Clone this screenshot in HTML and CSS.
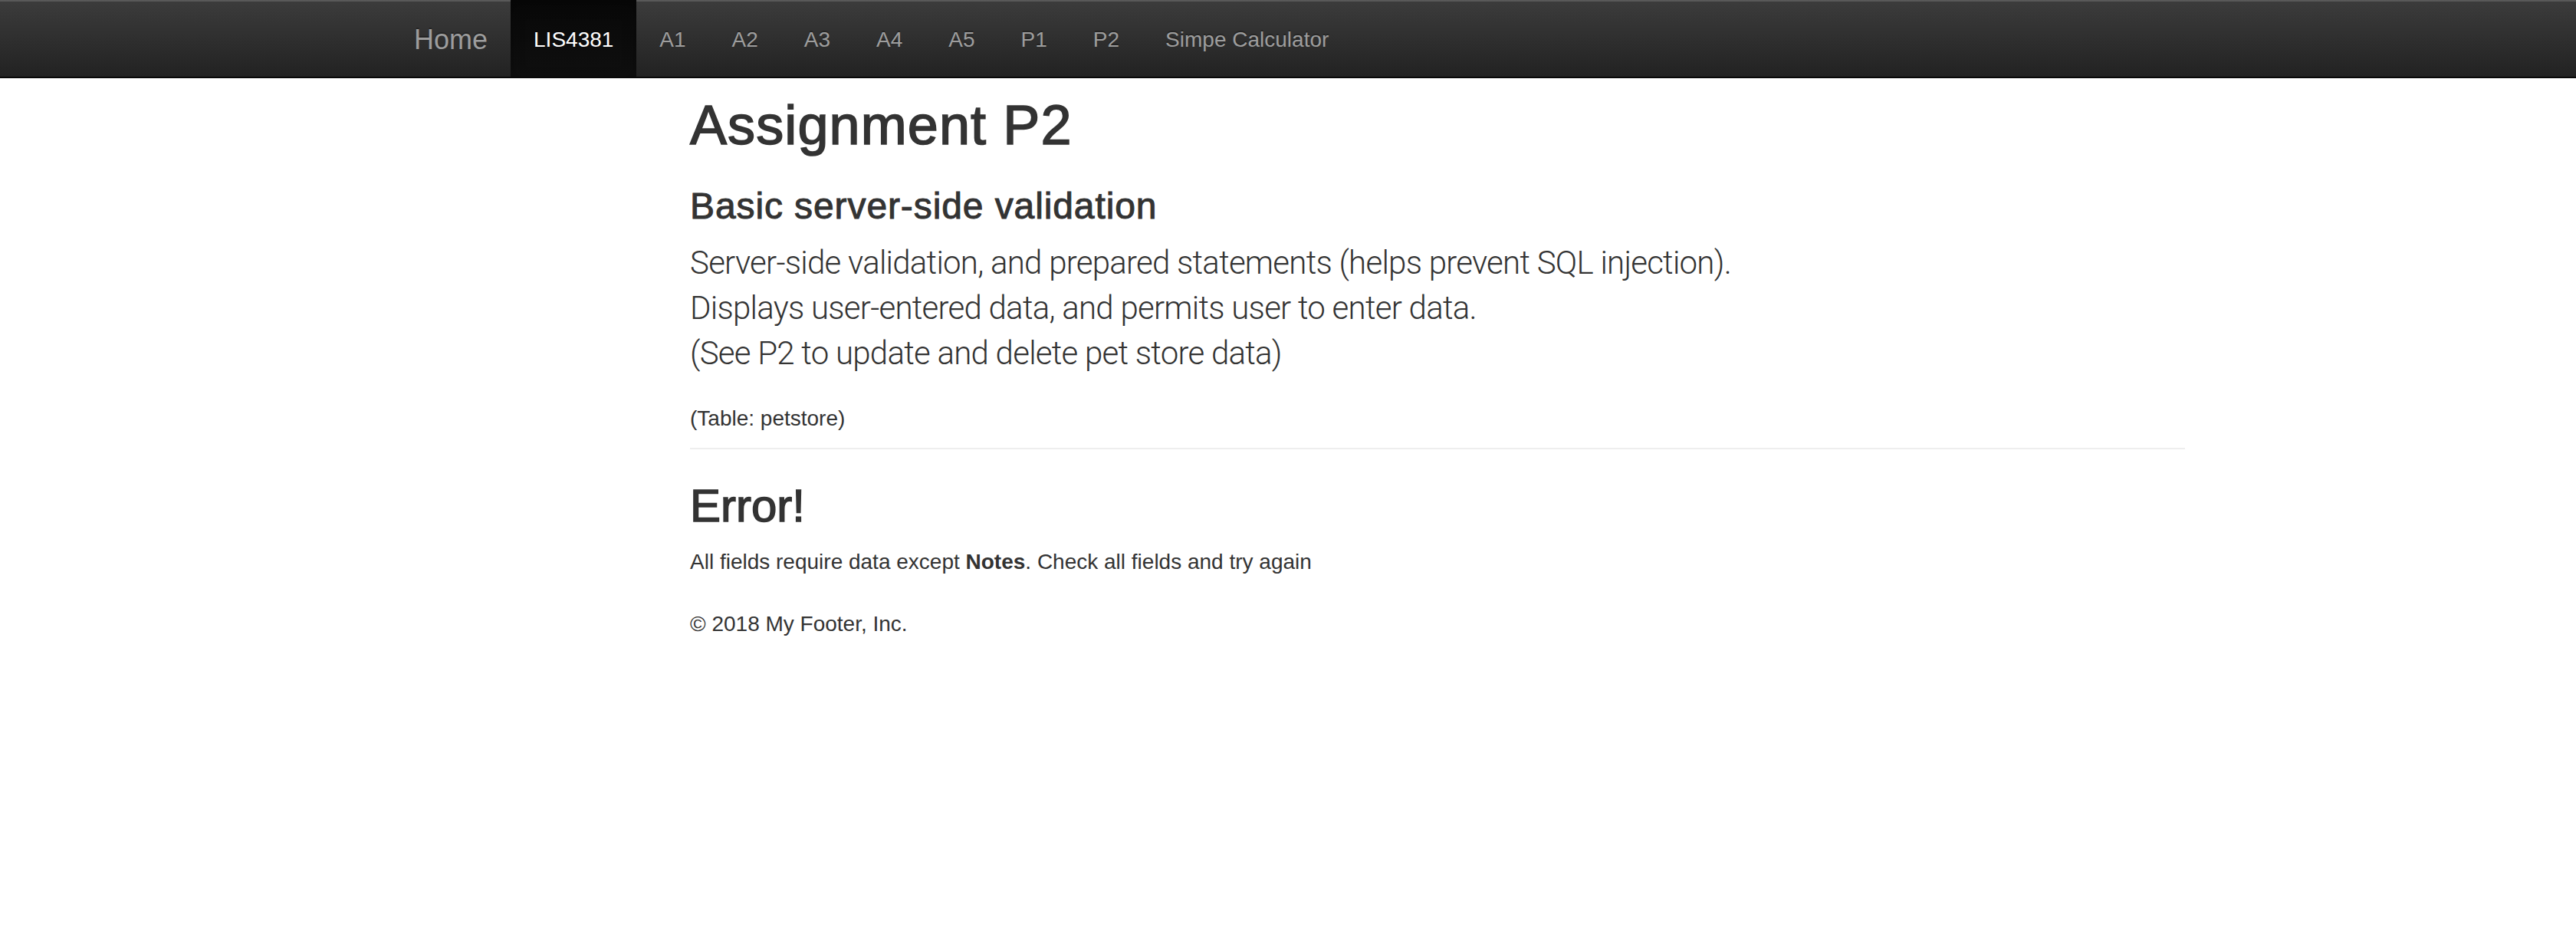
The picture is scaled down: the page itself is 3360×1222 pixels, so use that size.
FILE: index.html
```html
<!DOCTYPE html>
<html lang="en">
<head>
<meta charset="utf-8">
<title>LIS4381 - Assignment P2</title>
<link rel="stylesheet" href="styles.css">
</head>
<body>
<nav class="navbar">
  <div class="nav-container">
    <a class="brand" href="#">Home</a>
    <ul class="nav-links">
      <li class="active"><a href="#">LIS4381</a></li>
      <li><a href="#">A1</a></li>
      <li><a href="#">A2</a></li>
      <li><a href="#">A3</a></li>
      <li><a href="#">A4</a></li>
      <li><a href="#">A5</a></li>
      <li><a href="#">P1</a></li>
      <li><a href="#">P2</a></li>
      <li><a href="#">Simpe Calculator</a></li>
    </ul>
  </div>
</nav>
<main class="container">
  <div class="content">
    <h1 class="title">Assignment P2</h1>
    <h3 class="subtitle">Basic server-side validation</h3>
    <p class="lead">Server-side validation, and prepared statements (helps prevent SQL injection).<br>Displays user-entered data, and permits user to enter data.<br>(See P2 to update and delete pet store data)</p>
    <p class="table-note">(Table: petstore)</p>
    <hr class="divider">
    <h2 class="error-title">Error!</h2>
    <p class="error-text">All fields require data except <strong>Notes</strong>. Check all fields and try again</p>
    <footer class="footer">
      <p>&copy; 2018 My Footer, Inc.</p>
    </footer>
  </div>
</main>
</body>
</html>
```

FILE: styles.css
```css
html, body {
  margin: 0;
  padding: 0;
  background: #fff;
}
body {
  font-family: "Liberation Sans", Arial, Helvetica, sans-serif;
  font-size: 28px;
  line-height: 40px;
  color: #333;
}
a { text-decoration: none; }

.navbar {
  height: 100px;
  border-bottom: 2px solid #080808;
  background-image: linear-gradient(to bottom, #3c3c3c 0%, #222 100%);
  box-shadow: inset 0 2px 0 rgba(255,255,255,0.15);
}
.nav-container {
  width: 2340px;
  margin: 0 auto;
  display: flex;
  align-items: stretch;
  height: 100px;
}
.brand {
  display: block;
  padding: 32px 30px 28px;
  font-size: 36px;
  line-height: 40px;
  color: #9d9d9d;
  text-shadow: 0 -2px 0 rgba(0,0,0,0.25);
}
.nav-links {
  list-style: none;
  margin: 0;
  padding: 0;
  display: flex;
}
.nav-links li a {
  display: block;
  padding: 32px 30px 28px;
  font-size: 28px;
  line-height: 40px;
  color: #9d9d9d;
  text-shadow: 0 -2px 0 rgba(0,0,0,0.25);
}
.nav-links li.active a {
  color: #fff;
  background-image: linear-gradient(to bottom, #080808 0%, #0f0f0f 100%);
  box-shadow: inset 0 6px 18px rgba(0,0,0,0.25);
}

.container {
  width: 2340px;
  margin: 0 auto;
}
.content {
  margin-left: 390px;
}

.title {
  margin: 22px 0 20px;
  font-size: 72px;
  line-height: 79px;
  font-weight: 500;
  letter-spacing: 1.1px;
  -webkit-text-stroke: 1.6px #333;
}
.subtitle {
  margin: 39px 0 19px;
  font-size: 48px;
  line-height: 53px;
  font-weight: 500;
  letter-spacing: 0.9px;
  -webkit-text-stroke: 1px #333;
}
.lead {
  margin: 0 0 36px;
  font-family: Roboto, "Liberation Sans", sans-serif;
  font-weight: 300;
  font-size: 42px;
  line-height: 58.8px;
  letter-spacing: -0.75px;
}
.table-note {
  margin: 0;
  font-size: 28px;
  line-height: 40px;
}
.divider {
  margin: 18px 0 41px;
  border: 0;
  border-top: 2px solid #eee;
  height: 0;
}
.error-title {
  margin: 0 0 20px;
  font-size: 60px;
  line-height: 66px;
  font-weight: 500;
  -webkit-text-stroke: 1.5px #333;
}
.error-text {
  margin: 0;
}
.footer {
  padding-top: 41px;
}
.footer p {
  margin: 0;
}
```
